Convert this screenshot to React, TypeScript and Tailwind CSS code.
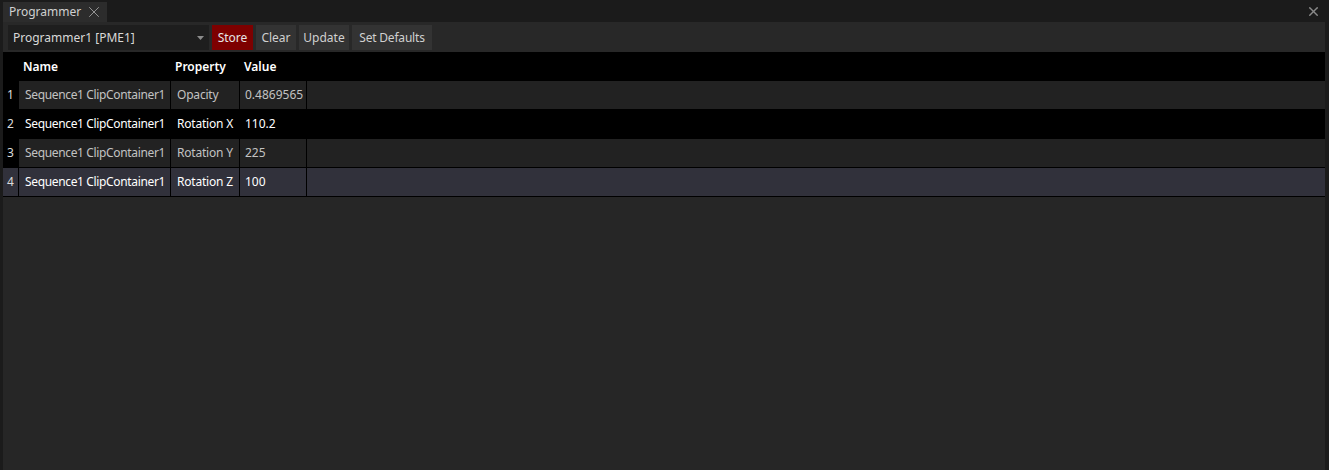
import { X } from 'lucide-react';

const rows = [
  { n: 1, name: 'Sequence1 ClipContainer1', prop: 'Opacity', value: '0.4869565', bg: 'bg-[#222222]', idx: 'bg-black', text: 'text-[#c2c2c2]' },
  { n: 2, name: 'Sequence1 ClipContainer1', prop: 'Rotation X', value: '110.2', bg: 'bg-black', idx: 'bg-black', text: 'text-white' },
  { n: 3, name: 'Sequence1 ClipContainer1', prop: 'Rotation Y', value: '225', bg: 'bg-[#222222]', idx: 'bg-black', text: 'text-[#c2c2c2]' },
  { n: 4, name: 'Sequence1 ClipContainer1', prop: 'Rotation Z', value: '100', bg: 'bg-[#31313b]', idx: 'bg-[#31313b]', text: 'text-white' },
];

export default function App() {
  return (
    <div className="flex h-[470px] w-[1329px] flex-col bg-[#1b1b1b] text-[12px] font-['Noto_Sans',sans-serif] whitespace-nowrap">
      {/* tab strip */}
      <div className="flex h-[22px] items-end justify-between pl-[3px] pr-[8px]">
        <div className="flex h-[20px] items-center gap-[4px] bg-[#2c2c2c] pl-[6px] pr-[4px] text-[#d0d0d0]">
          <span>Programmer</span>
          <X className="h-[18px] w-[18px] text-[#a0a0a0]" strokeWidth={1.2} />
        </div>
        <X className="mb-[3px] h-[15px] w-[15px] text-[#8a8a8a]" strokeWidth={2.2} />
      </div>

      <div className="ml-[3px] mr-[4px] flex flex-1 flex-col bg-[#262626]">
        {/* toolbar */}
        <div className="flex h-[30px] items-center gap-[3px] bg-[#282828] pl-[5px] pt-[1px]">
          <div className="flex h-[25px] w-[201px] items-center justify-between bg-[#1e1e1e] pl-[5px] pr-[5px] text-[#d8d8d8]">
            <span>Programmer1 [PME1]</span>
            <svg width="7" height="4" viewBox="0 0 7 4"><path d="M0 0h7L3.5 4z" fill="#8c8c8c" /></svg>
          </div>
          <button className="h-[25px] w-[41px] bg-[#7d0000] text-[#e6e6e6]">Store</button>
          <button className="h-[25px] w-[40px] bg-[#333333] text-[#d0d0d0]">Clear</button>
          <button className="h-[25px] w-[50px] bg-[#333333] text-[#d0d0d0]">Update</button>
          <button className="h-[25px] w-[80px] bg-[#333333] text-[#d0d0d0] tracking-[-0.2px]">Set Defaults</button>
        </div>

        {/* table */}
        <div className="flex flex-col gap-px bg-black pb-px">
          <div className="flex h-[28px] items-center bg-black pt-[2px] font-semibold text-white">
            <div className="w-[16px]" />
            <div className="w-[152px] pl-[4px]">Name</div>
            <div className="w-[69px] pl-[4px]">Property</div>
            <div className="pl-[4px]">Value</div>
          </div>
          {rows.map((r) => (
            <div key={r.n} className={`flex h-[28px] gap-px ${r.text}`}>
              <div className={`flex w-[15px] items-center pl-[4px] ${r.idx} text-[#dcdcdc]`}>{r.n}</div>
              <div className={`flex w-[151px] items-center overflow-hidden pl-[6px] tracking-[-0.35px] ${r.bg}`}>{r.name}</div>
              <div className={`flex w-[68px] items-center overflow-hidden pl-[6px] tracking-[-0.2px] ${r.bg}`}>{r.prop}</div>
              <div className={`flex w-[66px] items-center overflow-hidden pl-[5px] ${r.bg}`}>{r.value}</div>
              <div className={`flex-1 ${r.bg}`} />
            </div>
          ))}
        </div>
      </div>
    </div>
  );
}
